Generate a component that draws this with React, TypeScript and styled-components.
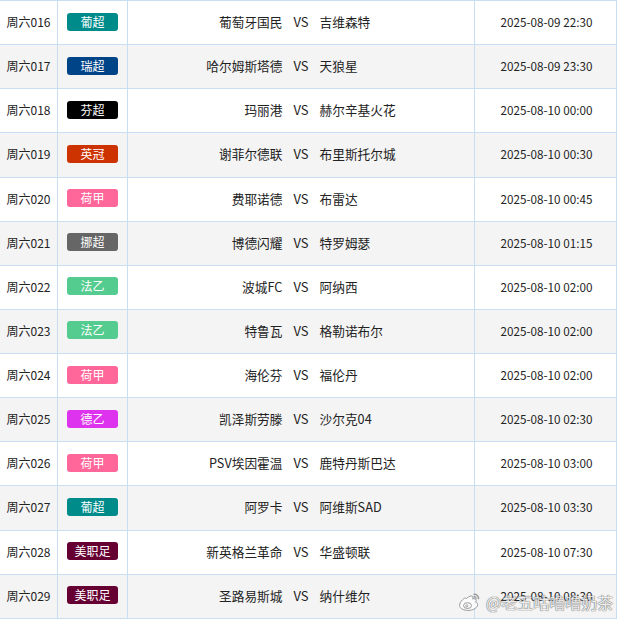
import React from "react";
import styled, { createGlobalStyle } from "styled-components";

const Global = createGlobalStyle`
  html, body { margin: 0; padding: 0; background: #ffffff; }
  body { font-family: "Noto Sans CJK SC", "Noto Sans", sans-serif; color: #222; }
`;

type Match = { no: string; league: string; color: string; home: string; away: string; time: string };

const data: Match[] = [
  { no: "周六016", league: "葡超", color: "#008b8b", home: "葡萄牙国民", away: "吉维森特", time: "2025-08-09 22:30" },
  { no: "周六017", league: "瑞超", color: "#004488", home: "哈尔姆斯塔德", away: "天狼星", time: "2025-08-09 23:30" },
  { no: "周六018", league: "芬超", color: "#000000", home: "玛丽港", away: "赫尔辛基火花", time: "2025-08-10 00:00" },
  { no: "周六019", league: "英冠", color: "#cc3300", home: "谢菲尔德联", away: "布里斯托尔城", time: "2025-08-10 00:30" },
  { no: "周六020", league: "荷甲", color: "#ff6699", home: "费耶诺德", away: "布雷达", time: "2025-08-10 00:45" },
  { no: "周六021", league: "挪超", color: "#666666", home: "博德闪耀", away: "特罗姆瑟", time: "2025-08-10 01:15" },
  { no: "周六022", league: "法乙", color: "#55cc8f", home: "波城FC", away: "阿纳西", time: "2025-08-10 02:00" },
  { no: "周六023", league: "法乙", color: "#55cc8f", home: "特鲁瓦", away: "格勒诺布尔", time: "2025-08-10 02:00" },
  { no: "周六024", league: "荷甲", color: "#ff6699", home: "海伦芬", away: "福伦丹", time: "2025-08-10 02:00" },
  { no: "周六025", league: "德乙", color: "#dd33ee", home: "凯泽斯劳滕", away: "沙尔克04", time: "2025-08-10 02:30" },
  { no: "周六026", league: "荷甲", color: "#ff6699", home: "PSV埃因霍温", away: "鹿特丹斯巴达", time: "2025-08-10 03:00" },
  { no: "周六027", league: "葡超", color: "#008b8b", home: "阿罗卡", away: "阿维斯SAD", time: "2025-08-10 03:30" },
  { no: "周六028", league: "美职足", color: "#660033", home: "新英格兰革命", away: "华盛顿联", time: "2025-08-10 07:30" },
  { no: "周六029", league: "美职足", color: "#660033", home: "圣路易斯城", away: "纳什维尔", time: "2025-08-10 08:30" },
];

const Page = styled.div`
  position: relative;
  width: 618px;
  height: 620px;
  overflow: hidden;
`;

const Table = styled.div`
  width: 617px;
  border-top: 1px solid #c9def2;
`;

const Row = styled.div<{ $alt: boolean }>`
  display: grid;
  grid-template-columns: 58px 70px 347px 142px;
  height: 44.14px;
  box-sizing: border-box;
  border-bottom: 1px solid #c9def2;
  background: ${(p) => (p.$alt ? "#f4f4f4" : "#ffffff")};
`;

const Cell = styled.div`
  box-sizing: border-box;
  border-right: 1px solid #c9def2;
  display: flex;
  align-items: center;
  justify-content: center;
  padding-bottom: 2px;
  font-size: 12px;
  color: #222;
  white-space: nowrap;
`;

const DateCell = styled(Cell)`
  font-size: 11.7px;
  padding-left: 2px;
`;

const Badge = styled.span<{ $bg: string }>`
  display: inline-flex;
  align-items: center;
  justify-content: center;
  width: 51px;
  height: 18px;
  border-radius: 3px;
  background: ${(p) => p.$bg};
  color: #ffffff;
  font-size: 12px;
  line-height: 18px;
`;

const MatchCell = styled(Cell)`
  font-size: 12.7px;
  gap: 11px;
`;

const Home = styled.span`
  flex: 1;
  text-align: right;
`;

const Away = styled.span`
  flex: 1;
  text-align: left;
`;

const Vs = styled.span`
  font-size: 13px;
`;

const Watermark = styled.div`
  position: absolute;
  left: 457px;
  top: 590px;
  display: flex;
  align-items: center;
  gap: 5px;
  opacity: 0.85;
`;

const WmText = styled.span`
  font-family: "Noto Sans CJK SC", sans-serif;
  font-size: 16px;
  color: rgba(255, 255, 255, 0.9);
  text-shadow: 0 0 1px #666, 0 0 1px #666, 0 0 1px #888;
`;

const WeiboIcon = () => (
  <svg width="24" height="20" viewBox="0 0 24 20">
    <path
      d="M9.5 6.5c2.5-2.5 5.5-3.2 6.3-1.9.4.6.2 1.5-.2 2.4 1.5-.5 3.2-.4 3.6.8.3.8-.1 1.5-.8 2.2 1.4.4 2.3 1.3 2.3 2.6 0 2.9-4.3 5.8-9.4 5.800C6.6 18.4 2.6 16.5 2.6 13.4c0-1.8 1.2-3.9 3.2-5.9 1.300-1.300 2.600-2 3.700-1z"
      fill="rgba(255,255,255,0.9)"
      stroke="#8a8a8a"
      strokeWidth="1"
    />
    <ellipse cx="10.5" cy="13.6" rx="4" ry="2.9" fill="none" stroke="#8a8a8a" strokeWidth="1" />
    <circle cx="9.8" cy="13.9" r="1.1" fill="none" stroke="#8a8a8a" strokeWidth="0.9" />
    <path d="M17.2 2.2c2.4 0 4.3 1.9 4.3 4.3" fill="none" stroke="#8a8a8a" strokeWidth="1.6" strokeLinecap="round" />
    <path d="M17 4.6c1.1 0 2 .9 2 2" fill="none" stroke="#8a8a8a" strokeWidth="1.3" strokeLinecap="round" />
  </svg>
);

export default function App() {
  return (
    <Page>
      <Global />
      <Table>
        {data.map((m, i) => (
          <Row key={m.no} $alt={i % 2 === 1}>
            <Cell>{m.no}</Cell>
            <Cell>
              <Badge $bg={m.color}>{m.league}</Badge>
            </Cell>
            <MatchCell>
              <Home>{m.home}</Home>
              <Vs>VS</Vs>
              <Away>{m.away}</Away>
            </MatchCell>
            <DateCell>{m.time}</DateCell>
          </Row>
        ))}
      </Table>
      <Watermark>
        <WeiboIcon />
        <WmText>@老五咕噜噜奶茶</WmText>
      </Watermark>
    </Page>
  );
}
